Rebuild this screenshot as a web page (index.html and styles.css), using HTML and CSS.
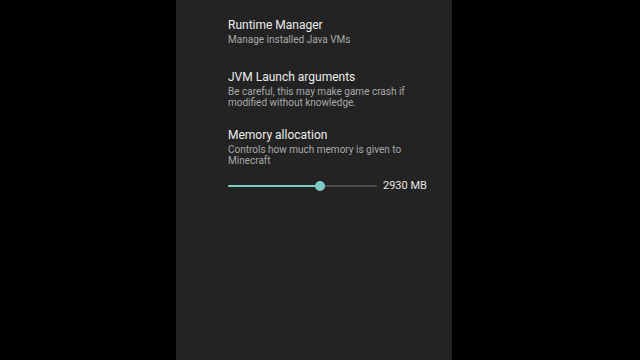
FILE: index.html
```html
<!DOCTYPE html>
<html>
<head>
<meta charset="utf-8">
<link rel="stylesheet" href="styles.css">
</head>
<body>
<div class="screen">
  <div class="panel">
    <div class="prefs">
      <div class="pref pref-short">
        <div class="title">Runtime Manager</div>
        <div class="summary">Manage installed Java VMs</div>
      </div>
      <div class="pref">
        <div class="title">JVM Launch arguments</div>
        <div class="summary">Be careful, this may make game crash if modified without knowledge.</div>
      </div>
      <div class="pref">
        <div class="title">Memory allocation</div>
        <div class="summary">Controls how much memory is given to Minecraft</div>
        <div class="slider-row">
          <div class="slider">
            <div class="track"></div>
            <div class="active" style="width: 62%"></div>
            <div class="thumb" style="left: 62%"></div>
          </div>
          <div class="value">2930 MB</div>
        </div>
      </div>
    </div>
  </div>
</div>
</body>
</html>
```

FILE: styles.css
```css
html, body {
  margin: 0;
  padding: 0;
  background: #000;
  width: 640px;
  height: 360px;
  overflow: hidden;
  font-family: Roboto, "Noto Sans", sans-serif;
}
.screen {
  display: flex;
  height: 360px;
  padding-left: 176px;
}
.panel {
  width: 276px;
  height: 360px;
  background: #232323;
  box-sizing: border-box;
  padding: 18px 0 0 52px;
}
.prefs {
  display: flex;
  flex-direction: column;
  gap: 20px;
  width: 200px;
}
.pref {
  display: flex;
  flex-direction: column;
}
.pref-short {
  min-height: 32px;
}
.title {
  font-size: 12px;
  line-height: 14px;
  color: #ececec;
  margin-bottom: 2px;
}
.summary {
  font-size: 10px;
  line-height: 11px;
  color: #a9a9a9;
}
.slider-row {
  display: flex;
  align-items: center;
  height: 16px;
  margin-top: 12px;
  width: 210px;
}
.slider {
  position: relative;
  width: 149px;
  height: 10px;
  margin-right: 6px;
}
.track {
  position: absolute;
  left: 0;
  right: 0;
  top: 4px;
  height: 2px;
  background: #4b4b4b;
  border-radius: 1px;
}
.active {
  position: absolute;
  left: 0;
  top: 4px;
  height: 2px;
  background: #80cdc6;
  border-radius: 1px;
}
.thumb {
  position: absolute;
  top: 0;
  width: 10px;
  height: 10px;
  margin-left: -5px;
  border-radius: 50%;
  background: #80cdc6;
}
.value {
  font-size: 11px;
  line-height: 14px;
  color: #e6e6e6;
  white-space: nowrap;
}
```
